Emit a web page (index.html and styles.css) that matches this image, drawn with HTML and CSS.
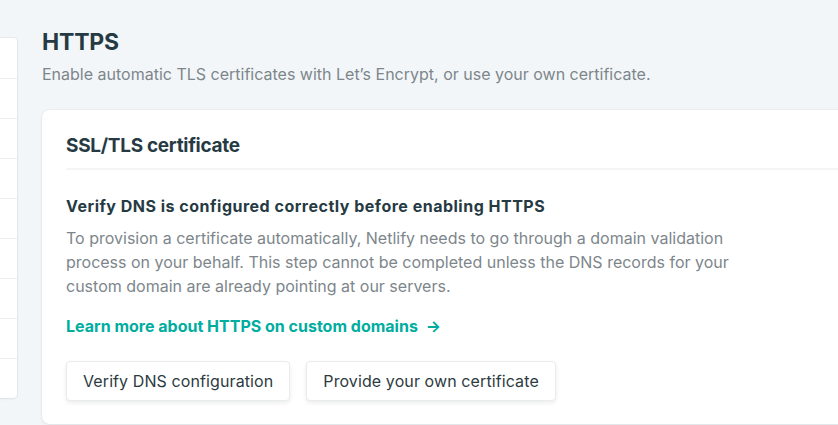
FILE: index.html
```html
<!DOCTYPE html>
<html lang="en">
<head>
<meta charset="utf-8">
<title>HTTPS</title>
<link rel="stylesheet" href="styles.css">
</head>
<body>
<div class="page">
  <aside class="sidebar">
    <div class="side-row"></div>
    <div class="side-row"></div>
    <div class="side-row"></div>
    <div class="side-row"></div>
    <div class="side-row"></div>
    <div class="side-row"></div>
    <div class="side-row"></div>
    <div class="side-row"></div>
    <div class="side-row"></div>
  </aside>
  <main class="main">
    <h1 class="title">HTTPS</h1>
    <p class="subtitle">Enable automatic TLS certificates with Let’s Encrypt, or use your own certificate.</p>
    <section class="card">
      <header class="card-header">
        <h2 class="card-title">SSL/TLS certificate</h2>
      </header>
      <div class="card-body">
        <h3 class="body-heading">Verify DNS is configured correctly before enabling HTTPS</h3>
        <p class="body-text">To provision a certificate automatically, Netlify needs to go through a domain validation process on your behalf. This step cannot be completed unless the DNS records for your custom domain are already pointing at our servers.</p>
        <a class="learn-link" href="#">Learn more about HTTPS on custom domains <span class="arrow">→</span></a>
        <div class="actions">
          <button class="btn" type="button">Verify DNS configuration</button>
          <button class="btn" type="button">Provide your own certificate</button>
        </div>
      </div>
    </section>
  </main>
</div>
</body>
</html>
```

FILE: styles.css
```css
* { box-sizing: border-box; }
html, body { margin: 0; padding: 0; }
body {
  background: #f3f6f9;
  font-family: Inter, "Noto Sans", sans-serif;
  color: #2d3b41;
  overflow: hidden;
  width: 838px;
  height: 425px;
}
.page {
  display: flex;
  align-items: flex-start;
}
.sidebar {
  flex: 0 0 240px;
  margin-left: -223px;
  margin-top: 38px;
  background: #fff;
  border-radius: 4px;
  box-shadow: 0 0 0 1px rgba(14, 30, 37, 0.04), 0 1px 3px rgba(14, 30, 37, 0.06);
}
.side-row {
  height: 40px;
  border-top: 1px solid #eceff1;
}
.side-row:first-child { border-top: 0; }
.main {
  flex: 0 0 860px;
  margin-left: 25px;
  padding-top: 28px;
}
.title {
  margin: 0;
  font-size: 23px;
  line-height: 28px;
  font-weight: 700;
  color: #263a43;
  letter-spacing: -0.2px;
}
.subtitle {
  margin: 6px 0 0;
  font-size: 16px;
  line-height: 24px;
  color: #7d868b;
}
.card {
  margin-top: 24px;
  background: #fff;
  border-radius: 8px;
  box-shadow: 0 0 0 1px rgba(14, 30, 37, 0.03), 0 2px 4px rgba(14, 30, 37, 0.05);
}
.card-header {
  margin: 0 24px;
  padding: 24px 0 10px;
  border-bottom: 2px solid #f2f4f5;
}
.card-title {
  margin: 0;
  font-size: 19px;
  line-height: 24px;
  font-weight: 700;
  color: #263a43;
  letter-spacing: -0.3px;
}
.card-body {
  padding: 24px 24px 23px;
}
.body-heading {
  margin: 0;
  font-size: 16px;
  line-height: 24px;
  font-weight: 700;
  color: #263a43;
  letter-spacing: 0.5px;
}
.body-text {
  margin: 8px 0 0;
  max-width: 680px;
  font-size: 16px;
  line-height: 24px;
  color: #7d868b;
}
.learn-link {
  display: inline-block;
  margin-top: 16px;
  font-size: 16px;
  line-height: 24px;
  font-weight: 700;
  color: #00ad9f;
  text-decoration: none;
}
.arrow { margin-left: 4px; }
.actions {
  display: flex;
  gap: 16px;
  margin-top: 23px;
}
.btn {
  font-family: inherit;
  font-size: 16px;
  line-height: 24px;
  letter-spacing: 0.1px;
  color: #2d3b41;
  background: #fff;
  border: 1px solid #e9ebed;
  border-radius: 4px;
  padding: 7px 16px;
  box-shadow: 0 2px 4px rgba(14, 30, 37, 0.08);
  cursor: pointer;
}
```
